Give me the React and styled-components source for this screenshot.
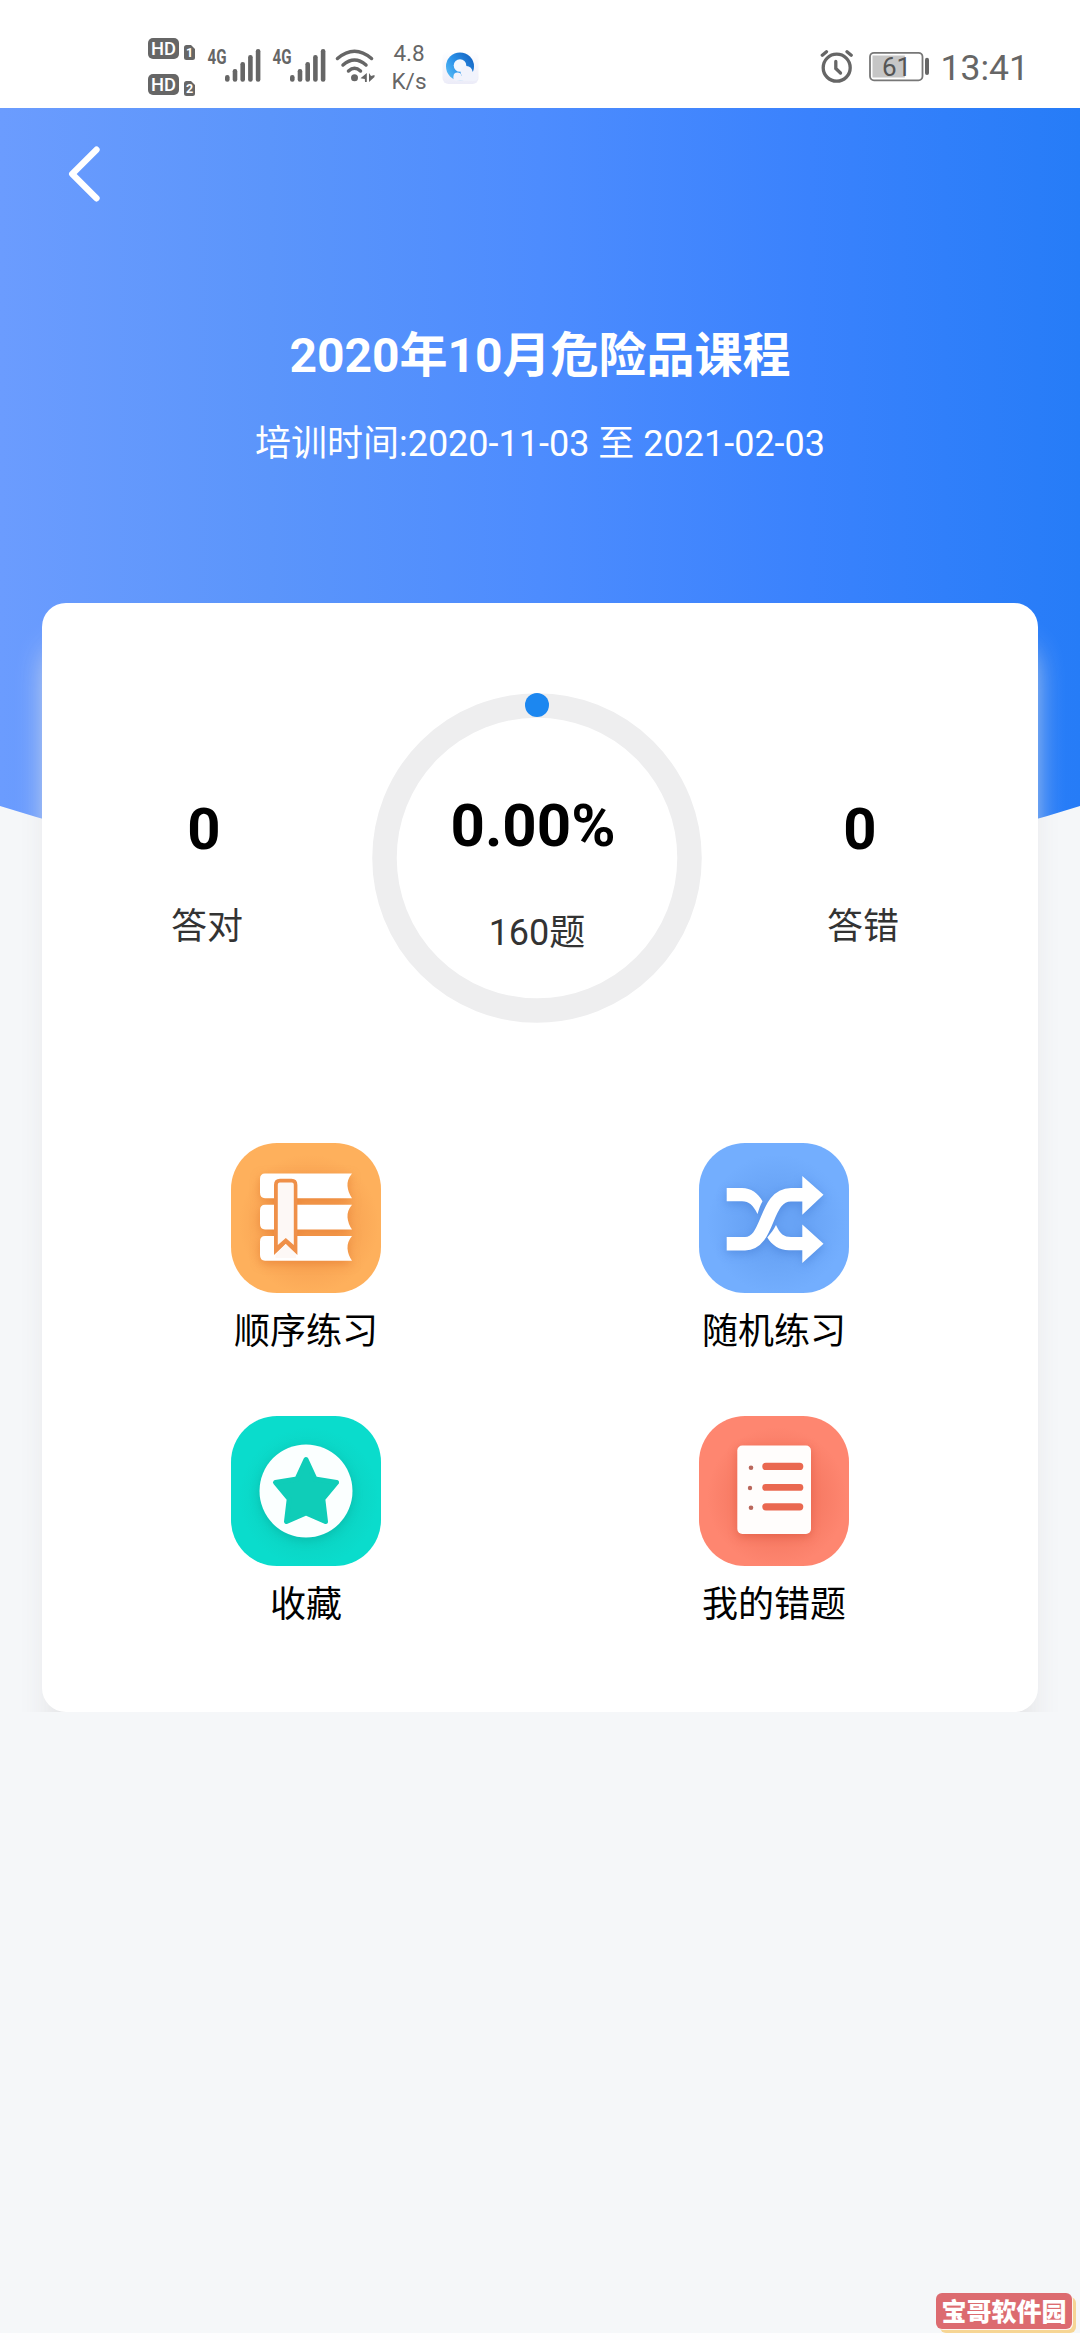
import React from "react";
import styled, {createGlobalStyle} from "styled-components";

const GlobalStyle = createGlobalStyle`
  * {
    box-sizing: border-box;
  }

  body {
    margin: 0;
    background-color: #f5f7f9;
    font-family: Roboto, "Noto Sans CJK SC", sans-serif;
  }
`

const Page = styled.div`
  position: relative;
  display: flex;
  flex-direction: column;
  width: 1080px;
  height: 2340px;
  overflow: hidden;
  background-color: #f5f7f9;
`

const StatusBar = styled.div`
  display: flex;
  justify-content: space-between;
  height: 108px;
  flex-shrink: 0;
  padding: 0 51px 0 148px;
  background-color: #ffffff;
  color: #666666;
`

const StatusGroup = styled.div`
  display: flex;
  align-items: flex-start;
`

const StatusIcon = styled.svg`
  display: block;
  flex-shrink: 0;
  margin: ${props => props.$top}px ${props => props.$right || 0}px 0 0;
`

const NetSpeed = styled.div`
  width: 42px;
  margin: 39px 12px 0 0;
  font-size: 22.5px;
  line-height: 28px;
  text-align: center;
`

const Clock = styled.div`
  margin-top: 47px;
  font-size: 35.5px;
  line-height: 42px;
`

const Header = styled.div`
  height: 779px;
  flex-shrink: 0;
  background: linear-gradient(90deg, #6b9cfe 0%, #5b95fb 25%, #4d8cfe 50%, #3a82fd 75%, #267cf7 100%);
  clip-path: ellipse(1216px 779px at 50% 0);
  color: #ffffff;
  text-align: center;
`

const NavBar = styled.div`
  display: flex;
  align-items: center;
  height: 132px;
  padding-left: 66px;
`

const CourseTitle = styled.h1`
  margin: 86px 0 0;
  font-size: 48px;
  font-weight: 700;
  line-height: 60px;
`

const CourseTime = styled.p`
  margin: 33px 0 0;
  font-size: 36px;
  line-height: 50px;
`

const CardWrapper = styled.div`
  position: relative;
  flex-shrink: 0;
  height: 1109px;
  margin-top: -284px;
  padding: 0 42px;
  overflow: hidden;
`

const Card = styled.div`
  height: 100%;
  padding-top: 90px;
  border-radius: 24px;
  background-color: #ffffff;
  box-shadow: 0 40px 30px -6px #e4e4e6;
`

const StatsRow = styled.div`
  display: flex;
  height: 330px;
`

const Stat = styled.div`
  width: ${props => props.$width}px;
  padding-top: 106px;
  text-align: center;
`

const StatNumber = styled.div`
  padding-right: ${props => props.$shift}px;
  color: #000000;
  font-size: ${props => props.$size || 58}px;
  font-weight: 700;
  line-height: 60px;
`

const StatLabel = styled.div`
  margin-top: ${props => props.$gap}px;
  color: #333333;
  font-size: 36px;
  line-height: 50px;
`

const Ring = styled.div`
  display: grid;
  width: 330px;
  height: 330px;

  > * {
    grid-area: 1 / 1;
  }
`

const RingText = styled.div`
  padding-top: 103px;
  text-align: center;
`

const MenuGrid = styled.div`
  display: grid;
  grid-template-columns: 468px 468px;
  justify-content: center;
  row-gap: 59px;
  margin-top: 120px;
`

const MenuItem = styled.div`
  display: flex;
  flex-direction: column;
  align-items: center;
`

const MenuIcon = styled.div`
  width: 150px;
  height: 150px;
  border-radius: 46px;
  background: radial-gradient(circle at 52% 54%, ${props => props.$shade} 25%, ${props => props.$color} 62%);
`

const MenuLabel = styled.div`
  margin-top: 14px;
  color: #000000;
  font-size: 36px;
  line-height: 50px;
`

const Footer = styled.div`
  height: 7px;
  margin-top: auto;
  flex-shrink: 0;
  background-color: #fdfdfe;
`

const SiteBadge = styled.div`
  position: absolute;
  right: 8px;
  bottom: 11px;
  width: 136px;
  height: 36px;
  border-radius: 6px;
  background-color: #dc6b70;
  box-shadow: 1px 1px 0 #fff3ee, 4px 4px 0 #f6d594;
  color: #ffffff;
  font-family: "Noto Sans CJK SC", sans-serif;
  font-size: 25px;
  font-weight: 900;
  line-height: 35px;
  text-align: center;
`

function HdIcon() {
    return (
        <StatusIcon $top={38} $right={10} width="48" height="58" viewBox="0 0 48 58">
            {[0, 36].map((y, i) => (
                <g key={y} transform={`translate(0 ${y})`} fontFamily="Roboto" fontWeight="700" fill="#ffffff">
                    <rect width="31" height="21" rx="5" fill="#666666"/>
                    <text x="3" y="17.3" fontSize="19" fontWeight="500" textLength="25" lengthAdjust="spacingAndGlyphs">HD</text>
                    <path d="M36 9.5Q36 7 38.500 7H43L47 11V19.500Q47 22 44.500 22H38.500Q36 22 36 19.500Z" fill="#666666"/>
                    <text x="41.500" y="19" fontSize="12.500" textAnchor="middle">{i + 1}</text>
                </g>
            ))}
        </StatusIcon>
    )
}

function SignalIcon({right}) {
    return (
        <StatusIcon $top={43} $right={right} width="55" height="40" viewBox="-2 -4 55 40" fill="#666666">
            <text x="-0.500" y="16.800" fontFamily="Roboto" fontSize="20.500" fontWeight="700" textLength="19" lengthAdjust="spacingAndGlyphs">4G</text>
            {[28, 22, 15, 8, 2].map((y, i) => (
                <rect key={y} x={17 + i * 7.7} y={y} width="4.6" height={34.7 - y} rx="2.2"/>
            ))}
        </StatusIcon>
    )
}

function WifiIcon() {
    return (
        <StatusIcon $top={48} $right={12} width="41" height="36" viewBox="0 0 41 36" fill="none" stroke="#666666" strokeWidth="3.500" strokeLinecap="round">
            <path d="M2.500 10.500Q19.500 -4 36.500 10.500"/>
            <path d="M8 17Q19.500 7 31 17"/>
            <path d="M13.500 23Q19.500 17.500 25.500 23"/>
            <g fill="#666666" stroke="none">
                <circle cx="19.500" cy="29.800" r="3.500"/>
                <path d="M31.800 25V34H30L29.800 31L25.500 30.200Z"/>
                <path d="M34 25V34L39.500 29V27L36 28Z"/>
            </g>
        </StatusIcon>
    )
}

function BrowserIcon() {
    return (
        <StatusIcon $top={50} width="38" height="36" viewBox="0 0 38 36">
            <defs>
                <linearGradient id="browserRing" x1="0" y1="1" x2="1" y2="0.3">
                    <stop offset="0" stopColor="#63c6f7"/>
                    <stop offset="0.5" stopColor="#2b93ea"/>
                    <stop offset="1" stopColor="#1668c5"/>
                </linearGradient>
                <linearGradient id="browserPlate" x1="0" y1="0" x2="0" y2="1">
                    <stop offset="0" stopColor="#ffffff"/>
                    <stop offset="1" stopColor="#ececf8"/>
                </linearGradient>
            </defs>
            <rect x="0.500" y="1" width="36" height="33" rx="6" fill="url(#browserPlate)"/>
            <circle cx="18" cy="16.500" r="14" fill="url(#browserRing)"/>
            <circle cx="18" cy="15.500" r="6.300" fill="#f3f7fe"/>
            <g fill="#f1f3fc">
                <circle cx="15.500" cy="26.500" r="4"/>
                <circle cx="24.500" cy="22" r="6"/>
                <circle cx="31" cy="26" r="4.500"/>
                <rect x="11.500" y="25.500" width="24" height="5.200" rx="2.600"/>
            </g>
        </StatusIcon>
    )
}

function AlarmIcon() {
    return (
        <StatusIcon $top={49} $right={15} width="34" height="35" viewBox="0 0 34 35" fill="none" stroke="#666666" strokeWidth="3.300" strokeLinecap="round">
            <circle cx="16.700" cy="18.700" r="13.500"/>
            <path d="M15.800 12.500V19.500L20.500 24"/>
            <path d="M2.300 6.200L6.500 2.700M27 2.700L31.200 6.200"/>
        </StatusIcon>
    )
}

function BatteryIcon({level}) {
    return (
        <StatusIcon $top={51} $right={10} width="62" height="31" viewBox="0 0 62 31">
            <rect x="1" y="1.800" width="52.500" height="27.500" rx="4" fill="none" stroke="#777777" strokeWidth="1.800"/>
            <rect x="3.500" y="4.500" width={level * 0.53} height="22" fill="#c6c6c6"/>
            <rect x="56" y="6.700" width="4" height="17.300" rx="2" fill="#666666"/>
            <text x="27.500" y="24.700" fontFamily="Roboto" fontSize="26" fill="#555555" textAnchor="middle">{level}</text>
        </StatusIcon>
    )
}

function BackIcon() {
    return (
        <svg width="36" height="60" viewBox="0 0 36 60" fill="none" stroke="#ffffff" strokeWidth="6.300" strokeLinecap="round" strokeLinejoin="round">
            <path d="M30.500 5.700L6.200 30L30.500 54.300"/>
        </svg>
    )
}

const MenuDrawing = styled.svg`
  display: block;
  width: 150px;
  height: 150px;
  filter: drop-shadow(0 3px 5px ${props => props.$shadow});
`

function BooksIcon() {
    return (
        <MenuDrawing $shadow="rgba(222, 112, 40, 0.5)" viewBox="0 0 150 150" fill="#ffffff">
            {[30.5, 61.7, 93].map(y => (
                <path key={y} transform={`translate(29 ${y})`} d="M5 0H92Q87 6 87.500 12.500Q88 19 92 24.700H5Q0 24.700 0 19V5.500Q0 0 5 0Z"/>
            ))}
            <path d="M43 112V42Q43 35.700 49 35.700H60.500Q66.400 35.700 66.400 42V112L54.700 101Z" fill="#ef9049"/>
            <path d="M46.800 102V41.500Q46.800 39.500 48.800 39.500H60.800Q62.800 39.500 62.800 41.500V102L54.800 95Z" fill="#fdf8f6"/>
            <path d="M54.700 101L65 111.500V115H44.500V111.500Z" fill="#fdf8f6"/>
        </MenuDrawing>
    )
}

function ShuffleIcon() {
    return (
        <MenuDrawing $shadow="rgba(55, 110, 200, 0.4)" viewBox="0 0 150 150" fill="#ffffff">
            <path d="M27.700 45H43C52 45 59 50 63.500 58.300C61.500 62 60 66 58.500 71C54 62 50 58.300 43 58.300H27.700Z"/>
            <path d="M77 82C81 91 85 94 92 94H105V107.300H90C80 107.300 73 102 68.300 94.500C72 90 74.500 87 77 82Z"/>
            <path d="M27.700 100.700H46C71 100.700 65 51.700 92 51.700H105" fill="none" stroke="#ffffff" strokeWidth="13.500"/>
            <path d="M103.300 33L124.500 51.700L103.300 71.700ZM103.300 81.500L124.500 100.700L103.300 120Z"/>
        </MenuDrawing>
    )
}

function StarIcon() {
    return (
        <MenuDrawing $shadow="rgba(0, 150, 135, 0.35)" viewBox="0 0 150 150">
            <circle cx="75" cy="75" r="46.500" fill="#fbffff"/>
            <path d="M75 43.500L84 63L105.500 66.500L91.800 83L94.500 105.500L75 97L55.500 105.500L58.200 83L44.500 66.500L66 63Z" fill="#0fcdb8" stroke="#0fcdb8" strokeWidth="5" strokeLinejoin="round"/>
        </MenuDrawing>
    )
}

function ListIcon() {
    return (
        <MenuDrawing $shadow="rgba(205, 65, 40, 0.4)" viewBox="0 0 150 150">
            <rect x="38.300" y="29.500" width="73.700" height="88.500" rx="5" fill="#fffdfc"/>
            <g fill="#ea6850">
                <rect x="63.300" y="46.700" width="41" height="7.300" rx="3.600"/>
                <rect x="63.300" y="68" width="41" height="6.800" rx="3.400"/>
                <rect x="63.300" y="87.200" width="41" height="7.200" rx="3.600"/>
            </g>
            <g fill="#b9675c">
                <circle cx="52" cy="51.700" r="2.300"/>
                <circle cx="51" cy="72" r="2.200"/>
                <circle cx="52" cy="91.700" r="2.300"/>
            </g>
        </MenuDrawing>
    )
}

const menus = [
    {label: "顺序练习", color: "#feb05c", shade: "#f79f50", icon: <BooksIcon/>},
    {label: "随机练习", color: "#73aefe", shade: "#68a3f5", icon: <ShuffleIcon/>},
    {label: "收藏", color: "#0adccc", shade: "#0dd0bf", icon: <StarIcon/>},
    {label: "我的错题", color: "#fe8670", shade: "#f4765f", icon: <ListIcon/>},
];

export default function App() {

    return (<Page>
                <GlobalStyle/>
                <StatusBar>
                    <StatusGroup>
                        <HdIcon/>
                        <SignalIcon right={10}/>
                        <SignalIcon right={9}/>
                        <WifiIcon/>
                        <NetSpeed>4.8 K/s</NetSpeed>
                        <BrowserIcon/>
                    </StatusGroup>
                    <StatusGroup>
                        <AlarmIcon/>
                        <BatteryIcon level={61}/>
                        <Clock>13:41</Clock>
                    </StatusGroup>
                </StatusBar>
                <Header>
                    <NavBar>
                        <BackIcon/>
                    </NavBar>
                    <CourseTitle>2020年10月危险品课程</CourseTitle>
                    <CourseTime>培训时间:2020-11-03 至 2021-02-03</CourseTime>
                </Header>
                <CardWrapper>
                    <Card>
                        <StatsRow>
                            <Stat $width={330}>
                                <StatNumber $shift={6}>0</StatNumber>
                                <StatLabel $gap={43}>答对</StatLabel>
                            </Stat>
                            <Ring>
                                <svg width="330" height="330" viewBox="0 0 330 330">
                                    <circle cx="165" cy="165" r="152.500" fill="none" stroke="#eeeeef" strokeWidth="24.500"/>
                                    <circle cx="165" cy="12" r="12" fill="#1c87f0"/>
                                </svg>
                                <RingText>
                                    <StatNumber $size={60} $shift={8}>0.00%</StatNumber>
                                    <StatLabel $gap={52}>160题</StatLabel>
                                </RingText>
                            </Ring>
                            <Stat $width={322}>
                                <StatNumber $shift={6}>0</StatNumber>
                                <StatLabel $gap={43}>答错</StatLabel>
                            </Stat>
                        </StatsRow>
                        <MenuGrid>
                            {menus.map(item => (
                                <MenuItem key={item.label}>
                                    <MenuIcon $color={item.color} $shade={item.shade}>{item.icon}</MenuIcon>
                                    <MenuLabel>{item.label}</MenuLabel>
                                </MenuItem>
                            ))}
                        </MenuGrid>
                    </Card>
                </CardWrapper>
                <Footer/>
                <SiteBadge>宝哥软件园</SiteBadge>
            </Page>
    )
}
